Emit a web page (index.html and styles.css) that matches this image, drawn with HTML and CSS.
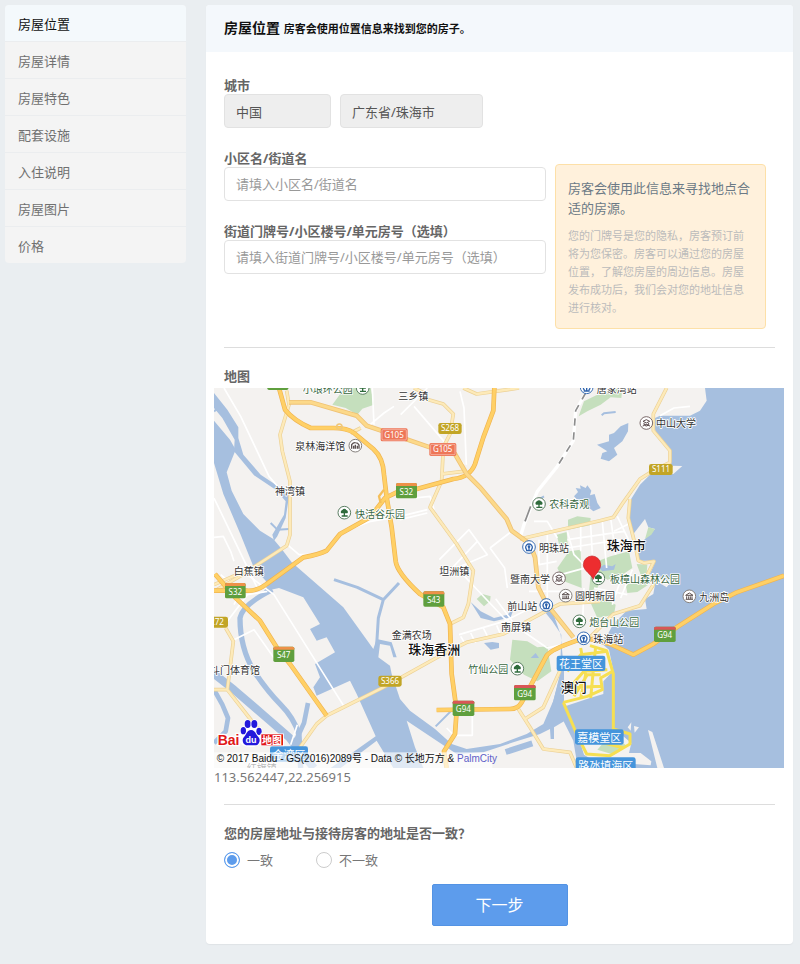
FILE: index.html
```html
<!DOCTYPE html>
<html lang="zh-CN">
<head>
<meta charset="utf-8">
<title>房屋位置</title>
<meta name="viewport" content="width=device-width, initial-scale=1">
<link rel="stylesheet" href="styles.css">
</head>
<body>
<div class="page">
  <nav class="sidebar">
    <a class="sidebar-item active" href="#">房屋位置</a>
    <a class="sidebar-item" href="#">房屋详情</a>
    <a class="sidebar-item" href="#">房屋特色</a>
    <a class="sidebar-item" href="#">配套设施</a>
    <a class="sidebar-item" href="#">入住说明</a>
    <a class="sidebar-item" href="#">房屋图片</a>
    <a class="sidebar-item" href="#">价格</a>
  </nav>

  <main class="card">
    <header class="card-header">
      <h1>房屋位置 <small>房客会使用位置信息来找到您的房子。</small></h1>
    </header>
    <form class="card-body">
      <div class="field">
        <label for="country">城市</label>
        <div class="city-row">
          <input class="control country" id="country" type="text" value="中国" disabled>
          <input class="control region" type="text" value="广东省/珠海市" aria-label="省市" disabled>
        </div>
      </div>

      <div class="address">
        <div class="address-fields">
          <div class="field">
            <label for="street">小区名/街道名</label>
            <input class="control" id="street" type="text" placeholder="请填入小区名/街道名">
          </div>
          <div class="field">
            <label for="door">街道门牌号/小区楼号/单元房号（选填）</label>
            <input class="control" id="door" type="text" placeholder="请填入街道门牌号/小区楼号/单元房号（选填）">
          </div>
        </div>
        <aside class="tip">
          <p class="tip-title">房客会使用此信息来寻找地点合适的房源。</p>
          <p class="tip-text">您的门牌号是您的隐私，房客预订前将为您保密。房客可以通过您的房屋位置，了解您房屋的周边信息。房屋发布成功后，我们会对您的地址信息进行核对。</p>
        </aside>
      </div>

      <hr>

      <h2 class="section-label">地图</h2>
      <div class="map">
        <svg class="map-canvas" viewBox="0 0 1710 1140" role="img" aria-label="珠海市地图">
          <defs>
            <g id="tree"><circle r="19" fill="#fff" stroke="#5a7d62" stroke-width="3"/><path d="M-9 2a6 6 0 0 1 3-10a7 7 0 0 1 12 0a6 6 0 0 1 3 10H2v6h8v4h-18v-4h6V2z" fill="#2f6b3c"/></g>
            <g id="station"><circle r="19" fill="#fff" stroke="#3a6fb5" stroke-width="3"/><path d="M-6 9a10 10 0 1 1 12 0M0-3v12M-9 11H9" fill="none" stroke="#2d62ac" stroke-width="4"/><circle cy="-1" r="4" fill="#2d62ac"/></g>
            <g id="school"><circle r="19" fill="#fff" stroke="#7b6a6a" stroke-width="3"/><path d="M-10-5L0-10l10 5L0 0zM-7 0v5H7V0M-11 9q6-4 11 0q5-4 11 0" fill="none" stroke="#5b4a4c" stroke-width="3"/></g>
            <g id="hall"><circle r="19" fill="#fff" stroke="#85807c" stroke-width="3"/><path d="M-11-3L0-10l11 7zM-8 0v8M-2 0v8M3 0v8M8 0v8M-11 9h22" fill="none" stroke="#5d5150" stroke-width="3"/></g>
            <g id="aquarium"><circle r="19" fill="#fff" stroke="#85807c" stroke-width="3"/><path d="M-11 9V-3Q-6-10 0-9q8 0 11 7V9M-5 9V0M0 9V-3M6 9V0" fill="none" stroke="#5d5150" stroke-width="4"/></g>
          </defs>
          <rect width="1710" height="1140" fill="#f4f2f0"/>

          <g class="park">
            <path d="M383 12L355 50L395 60L430 80L445 62L480 50L470 0H395z"/>
            <path d="M1094 85L1110 40L1150 20L1215 0H1225L1222 30L1190 28L1160 50L1120 70z"/>
            <path d="M1062 395L1090 385L1130 390L1128 412L1062 425zM1028 440L1058 432L1062 480L1040 488z"/>
            <path d="M1030 540L1065 490L1100 485L1103 600L1050 580z"/>
            <path d="M1150 520L1190 505L1245 490L1255 540L1225 560L1180 575L1150 550zM1170 545L1150 600L1125 610L1130 560z"/>
            <path d="M1130 645L1170 630L1205 650L1200 680L1150 690z"/>
            <path d="M895 755L940 760L970 778L1000 775L1012 850L970 880L930 860L888 815z"/>
            <path d="M788 633L805 618L830 625L828 640L810 655z"/>
          </g>

          <g class="water">
            <path d="M1473 0L1478 38L1458 68L1428 83L1338 83L1318 92L1325 135L1368 188L1372 233L1405 234L1378 258L1308 260L1278 290L1250 335L1245 390L1258 438L1293 393L1303 418L1323 423L1293 453L1268 480L1272 518L1325 518L1308 558L1343 573L1373 578L1358 598L1325 578L1318 618L1293 633L1298 663L1238 668L1198 708L1178 745L1155 760L1185 785L1198 848L1168 880L1168 918L1128 930L1058 953L1043 938L1040 858L1018 938L1000 1008L1048 998L1078 1058L1088 1118L1118 1140H1710V0z"/>
            <path d="M0 98L48 155L65 185L38 253L53 308L88 378L138 428L178 453L203 483L233 523L308 588L388 658L478 783L488 753L533 763L548 808L538 808L528 773L498 768L493 808L528 833L533 858L558 933L588 968L663 1023L713 1068L758 1083L858 1068L938 1038L988 1008L1018 938L1038 858L1042 740L1015 700L975 650L1005 640L1040 740L1050 850L1050 1000L1020 1018L1020 1053L1010 1053L1008 1023L978 1038L898 1063L808 1093L728 1098L668 1058L578 998L603 1078L628 1140H538L488 1058L380 1140H350L485 1045L428 918L408 878L308 923L298 898L318 868L303 828L363 793L338 748L308 758L288 723L318 708L268 628L195 600L150 610L180 560L100 478L118 475H160L200 520L240 560L175 600L120 540L80 440L28 318L0 225z"/>
            <path d="M0 15L40 65L73 118L73 150L88 200L140 260L200 300L225 325L215 390L190 445L180 458L175 440L210 380L215 340L185 305L120 262L60 190L62 155L25 90L0 60z"/>
            <path d="M1080 325L1092 312L1085 300L1100 302L1098 292L1115 300L1120 292L1132 308L1128 322L1142 318L1150 345L1160 360L1138 370L1120 355L1098 345z"/>
            <path d="M1149 170L1185 160L1185 140L1200 135L1220 115L1243 105L1242 130L1225 160L1200 180L1210 200L1185 220L1160 212L1165 195L1180 190z"/>
            <path d="M810 765L835 762L855 765L855 780L830 785z"/>
            <path d="M770 642L800 670L840 690L880 680L900 660L890 688L840 700L800 690z"/>
            <path d="M1155 540L1170 530L1195 535L1205 528L1200 545L1165 550zM950 810L965 795L975 810z"/>
          </g>
          <path d="M1293 453L1303 418L1323 423L1312 440zM1268 528L1300 530L1298 555L1280 560zM1235 590L1275 580L1303 590L1270 612L1240 615z" fill="#c5dfbd"/>
          <g class="creek">
            <path d="M175 605Q85 650 78 690Q78 780 120 850Q160 910 200 950Q240 990 255 1040L260 1140" stroke-width="16"/>
            <path d="M0 858L60 905L168 998L225 1048L275 1110L300 1140" stroke-width="24"/>
            <path d="M0 905L25 950L42 990L35 1030L0 1065M282 945L270 1005L245 1060" stroke-width="14"/>
            <path d="M360 575L430 598L508 635L555 585M508 635L493 690L488 770" stroke-width="9"/>
            <path d="M170 405L190 425L225 423M0 70L20 55M1163 82L1170 76L1205 72M665 1015L710 970M965 340L990 325" stroke-width="6"/>
            <path d="M875 1092L955 1066" stroke-width="18"/>
          </g>
          <g class="land">
            <path d="M1100 1068L1228 1045L1252 1065L1245 1095L1280 1095L1312 1120L1310 1132L1260 1128L1225 1110L1150 1125L1110 1100z"/>
            <path d="M1302 1026L1315 1032L1350 1140H1330zM1241 1018L1252 1003L1250 1028zM1260 1014L1275 1018L1262 1034z"/>
          </g>
          <path d="M1165 1068L1220 1060L1240 1075L1200 1100L1150 1085z" fill="#c5dfbd"/>

          <g class="street">
            <path d="M30 0L80 85L165 265L195 300M0 330L130 600M0 448L28 445L50 490L60 520M220 470L255 500H300L340 485"/>
            <path d="M380 435L470 400L558 385L640 365M600 55L750 230M560 80L640 0M465 113L510 75L540 55M475 0L480 110M738 10L750 60L757 230"/>
            <path d="M676 515L765 425L820 500L728 540M700 555L790 460M828 480L893 430M728 540L870 690L1000 780L1045 770"/>
            <path d="M828 480L872 540L880 600M600 330L648 325L660 365M558 395L640 375M960 400H1000L1030 450"/>
            <path d="M100 560L180 620L390 955M60 755L120 725L180 810M40 700L100 620L160 610M20 560L80 610L60 650M250 1010L230 1070"/>
            <path d="M735 740L870 700L970 650M740 745L755 770M770 735L785 765M808 720L823 750M848 712L860 740M845 632L895 700"/>
            <path d="M975 455V530L1028 520M1000 440V640M1060 430L1080 500L1140 560M1060 455L1230 430M1060 480L1220 455M1100 415V490M1130 410L1135 500M1165 400L1178 540M1190 390L1205 500M1210 385L1260 490M945 610H1040M1110 600L1105 720"/>
            <path d="M1200 430L1250 405M1225 560L1195 650M1255 545L1220 630M1140 600L1240 620M1040 560L1150 530M1338 83L1380 60L1428 55M698 1020L720 1042H775V970"/>
          </g>

          <g>
            <path d="M1115 15L1085 68L1078 158L1028 238L970 310L930 410L918 450" fill="none" stroke="#fff" stroke-width="10"/>
            <path d="M1115 15L1085 68L1078 158L1028 238" fill="none" stroke="#8d8d8d" stroke-width="5" stroke-dasharray="22 20"/>
            <path d="M950 355L933 400" fill="none" stroke="#8d8d8d" stroke-width="5"/>
          </g>

          <g class="minor-edge">
            <path id="m1" d="M218 8L225 50L198 140L205 190L228 280V440L218 473L118 538L0 590"/>
            <path id="m2" d="M258 1078L308 1008L338 983L388 958L508 898L688 798L758 763L868 738L998 668L1038 648L1158 640"/>
            <path id="m3" d="M618 28L688 48L718 78L708 138L688 178L683 278L648 358L728 468L778 548L763 648L748 688L708 708M683 258L748 250"/>
            <path id="m4" d="M918 453L1158 398L1198 388L1228 343L1278 273L1318 248L1368 223V188L1318 128V78L1358 0M1248 333L1243 390L1263 468L1273 518L1290 525L1320 520L1300 560L1318 590L1278 653L1198 678L1128 748"/>
            <path id="m5" d="M913 963L948 1018L988 1083L1068 1093L1088 1140M933 993L988 958L1038 848M35 720L58 760L40 905L130 1020M0 905H40M748 0L788 18L915 0M640 20L600 0M0 610L95 555M440 120L410 135"/>
          </g>
          <g class="minor"><use href="#m1"/><use href="#m2"/><use href="#m3"/><use href="#m4"/><use href="#m5"/></g>
          <g class="major-edge">
            <path id="a1" d="M195 0L213 65Q240 98 290 120H358Q400 120 420 135L478 183Q508 210 510 260L518 328L533 418L545 520Q550 555 618 618L688 658L708 708L713 858L728 968L723 1038L690 1090L698 1140"/>
            <path id="a2" d="M841 0L838 68L808 148L783 228Q768 268 718 273L608 303L548 313L513 330L468 388L378 438L338 488Q315 500 268 508L158 588Q130 610 98 608H0"/>
            <path id="a3" d="M3 558L63 628L138 698L188 778L228 828L338 983"/>
            <path id="a4" d="M668 966L888 963Q912 963 923 943L998 803Q1010 785 1088 758L1128 753L1188 768L1258 800L1318 768L1388 718L1498 648L1568 613L1710 563"/>
          </g>
          <g class="major"><use href="#a1"/><use href="#a2"/><use href="#a3"/><use href="#a4"/></g>
          <path d="M500 345L495 325L510 305" fill="none" stroke="#f5bf5a" stroke-width="7"/>
          <circle cx="376" cy="116" r="8" fill="none" stroke="#f0c878" stroke-width="5"/>
          <path d="M225 43H290L428 83L458 113L508 130L648 178L723 198L758 258L798 298L878 393L893 428L948 468L963 508L973 598L998 648L1078 748" fill="none" stroke="#efc274" stroke-width="14"/>
          <path d="M225 43H290L428 83L458 113L508 130L648 178L723 198L758 258L798 298L878 393L893 428L948 468L963 508L973 598L998 648L1078 748" fill="none" stroke="#fcd98a" stroke-width="9"/>
          <g fill="none" stroke="#f6df52" stroke-width="9" stroke-linejoin="round">
            <path d="M1048 943L1088 1038L1118 1098L1188 1103L1248 1068V1038L1198 1023V858L1178 788L1128 773M1048 943L1120 925L1165 905L1160 870L1195 850M1060 850L1100 800L1180 790M1065 900L1110 850L1180 845M1080 925L1120 860L1160 860M1100 780L1115 860L1100 930M1145 775L1130 930M1050 900L1160 895M1090 1045L1230 1080"/>
          </g>

          <g class="place">
            <text x="553" y="23">三乡镇</text><text x="244" y="173">泉林海洋馆</text><text x="183" y="307">神湾镇</text>
            <text x="59" y="547">白蕉镇</text><text x="676" y="548">坦洲镇</text><text x="975" y="477">明珠站</text>
            <text x="888" y="571">暨南大学</text><text x="1148" y="0">唐家湾站</text><text x="1326" y="103">中山大学</text>
            <text x="1083" y="623">圆明新园</text><text x="880" y="653">前山站</text><text x="861" y="716">南屏镇</text>
            <text x="1138" y="751">珠海站</text><text x="1456" y="625">九洲岛</text><text x="533" y="740">金满农场</text>
            <text x="-12" y="843">斗门体育馆</text><text x="98" y="1139">红旗镇</text>
          </g>
          <g class="place green">
            <text x="266" y="0">小琅环公园</text><text x="423" y="375">快活谷乐园</text><text x="1006" y="346">农科奇观</text>
            <text x="1188" y="571">板樟山森林公园</text><text x="1126" y="700">炮台山公园</text><text x="763" y="842">竹仙公园</text>
          </g>
          <g class="city">
            <text x="1178" y="470">珠海市</text><text x="583" y="782">珠海香洲</text><text x="1040" y="896">澳门</text>
          </g>

          <use href="#aquarium" x="424" y="173"/><use href="#tree" x="391" y="374"/><use href="#tree" x="446" y="0"/>
          <use href="#tree" x="975" y="348"/><use href="#station" x="945" y="477"/><use href="#school" x="1035" y="571"/>
          <use href="#station" x="1118" y="-2"/><use href="#school" x="1297" y="105"/><use href="#tree" x="1153" y="571"/>
          <use href="#hall" x="1055" y="623"/><use href="#station" x="997" y="651"/><use href="#tree" x="1096" y="700"/>
          <use href="#station" x="1109" y="751"/><use href="#hall" x="1426" y="625"/><use href="#tree" x="910" y="842"/>

          <g class="shield">
            <g fill="#ee7657"><rect x="500" y="121" width="81" height="39" rx="5"/><rect x="646" y="165" width="81" height="39" rx="5"/></g>
            <g fill="none" stroke="#fff" stroke-opacity=".6" stroke-width="2"><rect x="504" y="125" width="73" height="31" rx="3"/><rect x="650" y="169" width="73" height="31" rx="3"/></g>
            <g fill="#c2a526"><rect x="673" y="105" width="70" height="33" rx="7"/><rect x="1305" y="228" width="71" height="33" rx="7"/><rect x="-30" y="686" width="72" height="33" rx="7"/><rect x="493" y="863" width="70" height="33" rx="7"/></g>
            <g fill="#5f9f3e"><rect x="160" y="-40" width="63" height="46" rx="5"/><rect x="546" y="285" width="63" height="46" rx="5"/><rect x="33" y="585" width="62" height="46" rx="5"/><rect x="178" y="776" width="63" height="46" rx="5"/><rect x="628" y="610" width="63" height="46" rx="5"/><rect x="716" y="938" width="65" height="46" rx="5"/><rect x="900" y="891" width="65" height="46" rx="5"/><rect x="1320" y="716" width="65" height="46" rx="5"/></g>
            <path fill="#ee9148" d="M546 294v-4q0-5 5-5h53q5 0 5 5v4zM33 594v-4q0-5 5-5h52q5 0 5 5v4zM178 785v-4q0-5 5-5h53q5 0 5 5v4zM628 619v-4q0-5 5-5h53q5 0 5 5v4z"/>
            <path fill="#d95656" d="M716 947v-4q0-5 5-5h55q5 0 5 5v4zM900 900v-4q0-5 5-5h55q5 0 5 5v4zM1320 725v-4q0-5 5-5h55q5 0 5 5v4z"/>
            <text x="540" y="149">G105</text><text x="686" y="193">G105</text><text x="708" y="130">S268</text><text x="1341" y="253">S111</text>
            <text x="9" y="711">272</text><text x="528" y="888">S366</text><text x="577" y="320">S32</text><text x="64" y="620">S32</text>
            <text x="209" y="811">S47</text><text x="659" y="645">S43</text><text x="748" y="973">G94</text><text x="932" y="926">G94</text><text x="1352" y="751">G94</text>
          </g>

          <g class="district">
            <rect x="1028" y="803" width="146" height="46" rx="7"/><rect x="1083" y="1024" width="146" height="46" rx="7"/>
            <rect x="1085" y="1108" width="180" height="46" rx="7"/><rect x="168" y="1075" width="114" height="46" rx="7"/>
            <text x="1101" y="826">花王堂区</text><text x="1156" y="1047">嘉模堂区</text><text x="1175" y="1132">路氹填海区</text><text x="225" y="1098">金湾区</text>
          </g>

          <path d="M1138 574C1132 558 1108 548 1108 530a26 26 0 0 1 52 0C1160 548 1142 558 1138 574z" fill="#ed2d2f" stroke="#c51f24" stroke-width="2"/>

          <g class="brand">
            <path d="M109 1018a30 30 0 0 1 30 34q-4 20-30 20t-30-20a30 30 0 0 1 30-34z" fill="#fff" stroke="#fff" stroke-width="10"/>
            <text class="brand-name" x="11" y="1071">Bai</text>
            <g fill="#2319dc" stroke="#fff" stroke-width="4" paint-order="stroke"><ellipse cx="88" cy="1028" rx="8" ry="11"/><ellipse cx="101" cy="1008" rx="9" ry="12"/><ellipse cx="121" cy="1008" rx="9" ry="12"/><ellipse cx="135" cy="1030" rx="8" ry="11"/><path d="M111 1026c13 0 14 14 22 21s3 25-9 25H99c-12 0-17-17-9-25s9-21 21-21z"/></g>
            <text class="brand-du" x="111" y="1066">du</text>
            <rect x="142" y="1039" width="65" height="33" fill="#e11718" stroke="#fff" stroke-width="5" paint-order="stroke"/>
            <text class="brand-map" x="174" y="1056">地图</text>
          </g>

          <rect x="0" y="1093" width="835" height="47" fill="#fff" fill-opacity=".65"/>
          <text class="credit" x="8" y="1122">© 2017 Baidu - GS(2016)2089号 - Data © 长地万方 &amp; <a href="#">PalmCity</a></text>
        </svg>
        <p class="coords">113.562447,22.256915</p>
      </div>

      <hr>

      <fieldset class="same-address">
        <legend>您的房屋地址与接待房客的地址是否一致？</legend>
        <div class="radio-row">
          <label class="radio"><input type="radio" name="same" checked>一致</label>
          <label class="radio"><input type="radio" name="same">不一致</label>
        </div>
      </fieldset>
      <button class="next" type="button">下一步</button>
    </form>
  </main>
</div>
</body>
</html>
```
FILE: styles.css
```css
* { box-sizing: border-box; }

body {
  margin: 0;
  background: #eaeef1;
  color: #666;
  font: 13px/18px "Noto Sans", "Noto Sans CJK SC", sans-serif;
}

h1, h2, p { margin: 0; }

.page {
  display: grid;
  grid-template-columns: 181px minmax(0, 1fr);
  gap: 20px;
  align-items: start;
  padding: 5px 7px 19px 5px;
}

.sidebar {
  display: flex;
  flex-direction: column;
  border-radius: 4px;
  overflow: hidden;
  background: #f4f4f4;
}

.sidebar-item {
  padding: 10px 13px 8px;
  border-bottom: 1px solid #ebedef;
  color: #707070;
  line-height: 18px;
  text-decoration: none;
}

.sidebar-item:last-child { border-bottom: 0; }

.sidebar-item.active {
  background: #f4f9fc;
  color: #111;
}

.card {
  border-radius: 4px;
  background: #fff;
  box-shadow: 0 1px 1px #dfe3e6;
  overflow: hidden;
}

.card-header {
  padding: 13px 18px;
  background: #f4f8fc;
}

h1 {
  color: #111;
  font-size: 14px;
  font-weight: bold;
  line-height: 20px;
}

h1 small { font-size: 11px; }

.card-body { padding: 24px 18px 18px; }

.field {
  display: flex;
  flex-direction: column;
  margin-bottom: 21px;
}

.field label,
.section-label,
legend {
  padding: 0;
  color: #666;
  font-size: 13px;
  font-weight: bold;
  line-height: 18px;
}

.city-row {
  display: flex;
  gap: 9px;
}

.control {
  width: 100%;
  height: 34px;
  padding: 0 11px;
  border: 1px solid #e2e2e2;
  border-radius: 4px;
  background: #fff;
  color: #555;
  font: inherit;
}

.control::placeholder { color: #999; opacity: 1; }

.control:disabled { background: #eee; }

.country { width: 107px; }

.region { width: 143px; }

.address {
  display: grid;
  grid-template-columns: minmax(0, 322fr) minmax(0, 211fr);
  gap: 9px;
  align-items: start;
  padding-right: 9px;
}

.tip {
  margin-top: 15px;
  padding: 13px 12px 11px;
  border: 1px solid #fde0a8;
  border-radius: 4px;
  background: #fff1dc;
}

.tip-title {
  margin-bottom: 9px;
  color: #6c7a86;
  line-height: 20px;
}

.tip-text {
  color: #bbb;
  font-size: 11px;
  line-height: 18px;
}

hr {
  height: 1px;
  margin: 18px 0 19px;
  border: 0;
  background: #ddd;
}

.map { margin: 3px -9px 0 -10px; }

.map-canvas {
  display: block;
  width: 100%;
  height: auto;
  overflow: hidden;
}

.park { fill: #c5dfbd; }
.water { fill: #a6bfdf; }
.land { fill: #f4f2f0; }

.creek, .street, .minor, .minor-edge, .major, .major-edge {
  fill: none;
  stroke-linejoin: round;
}

.creek { stroke: #a6bfdf; }
.street { stroke: #fff; stroke-width: 5px; }
.minor-edge { stroke: #ecd196; stroke-width: 11px; }
.minor { stroke: #fdeab9; stroke-width: 7px; }
.major-edge { stroke: #f0b450; stroke-width: 14px; }
.major { stroke: #ffd066; stroke-width: 10px; }

.place, .city {
  font-family: "Noto Sans CJK SC", sans-serif;
  dominant-baseline: central;
  fill: #333;
  stroke: #fff;
  stroke-width: 5px;
  stroke-linejoin: round;
  paint-order: stroke;
}

.place { font-size: 30px; }
.place.green { fill: #38673f; }
.city { font-size: 39px; font-weight: 500; fill: #111; }

.shield text {
  fill: #fff;
  font-size: 24px;
  text-anchor: middle;
}

.district { fill: #4595dc; }

.district text {
  fill: #fff;
  font-size: 33px;
  text-anchor: middle;
  dominant-baseline: central;
}

.brand text {
  font-family: "Liberation Sans", "Noto Sans CJK SC", sans-serif;
  font-weight: bold;
}

.brand .brand-name {
  fill: #e11718;
  stroke: #fff;
  stroke-width: 8px;
  paint-order: stroke;
  font-size: 42px;
}

.brand .brand-du { fill: #fff; font-size: 27px; text-anchor: middle; }
.brand .brand-map { fill: #fff; font-size: 30px; text-anchor: middle; dominant-baseline: central; }

.credit {
  fill: #111;
  font-family: "Liberation Sans", "Noto Sans CJK SC", sans-serif;
  font-size: 30px;
}

.credit a { fill: #6060c8; }

.coords {
  color: #777;
  line-height: 19px;
}

.map + hr { margin-top: 17px; }

.same-address {
  min-width: 0;
  margin: 0 0 15px;
  padding: 0;
  border: 0;
}

.radio-row {
  display: flex;
  gap: 43px;
  padding-top: 9px;
}

.radio {
  display: flex;
  align-items: center;
  gap: 7px;
  color: #777;
}

.radio input {
  appearance: none;
  width: 16px;
  height: 16px;
  margin: 0;
  border: 1px solid #ccc;
  border-radius: 50%;
  background: #fff;
}

.radio input:checked {
  border-color: #5d9cec;
  background: #5d9cec;
  box-shadow: inset 0 0 0 2px #fff;
}

.next {
  display: block;
  width: 136px;
  height: 42px;
  margin: 0 auto;
  border: 1px solid #5393e4;
  border-radius: 2px;
  background: #5d9cec;
  color: #fff;
  font: 16px/24px "Noto Sans", "Noto Sans CJK SC", sans-serif;
}
```
